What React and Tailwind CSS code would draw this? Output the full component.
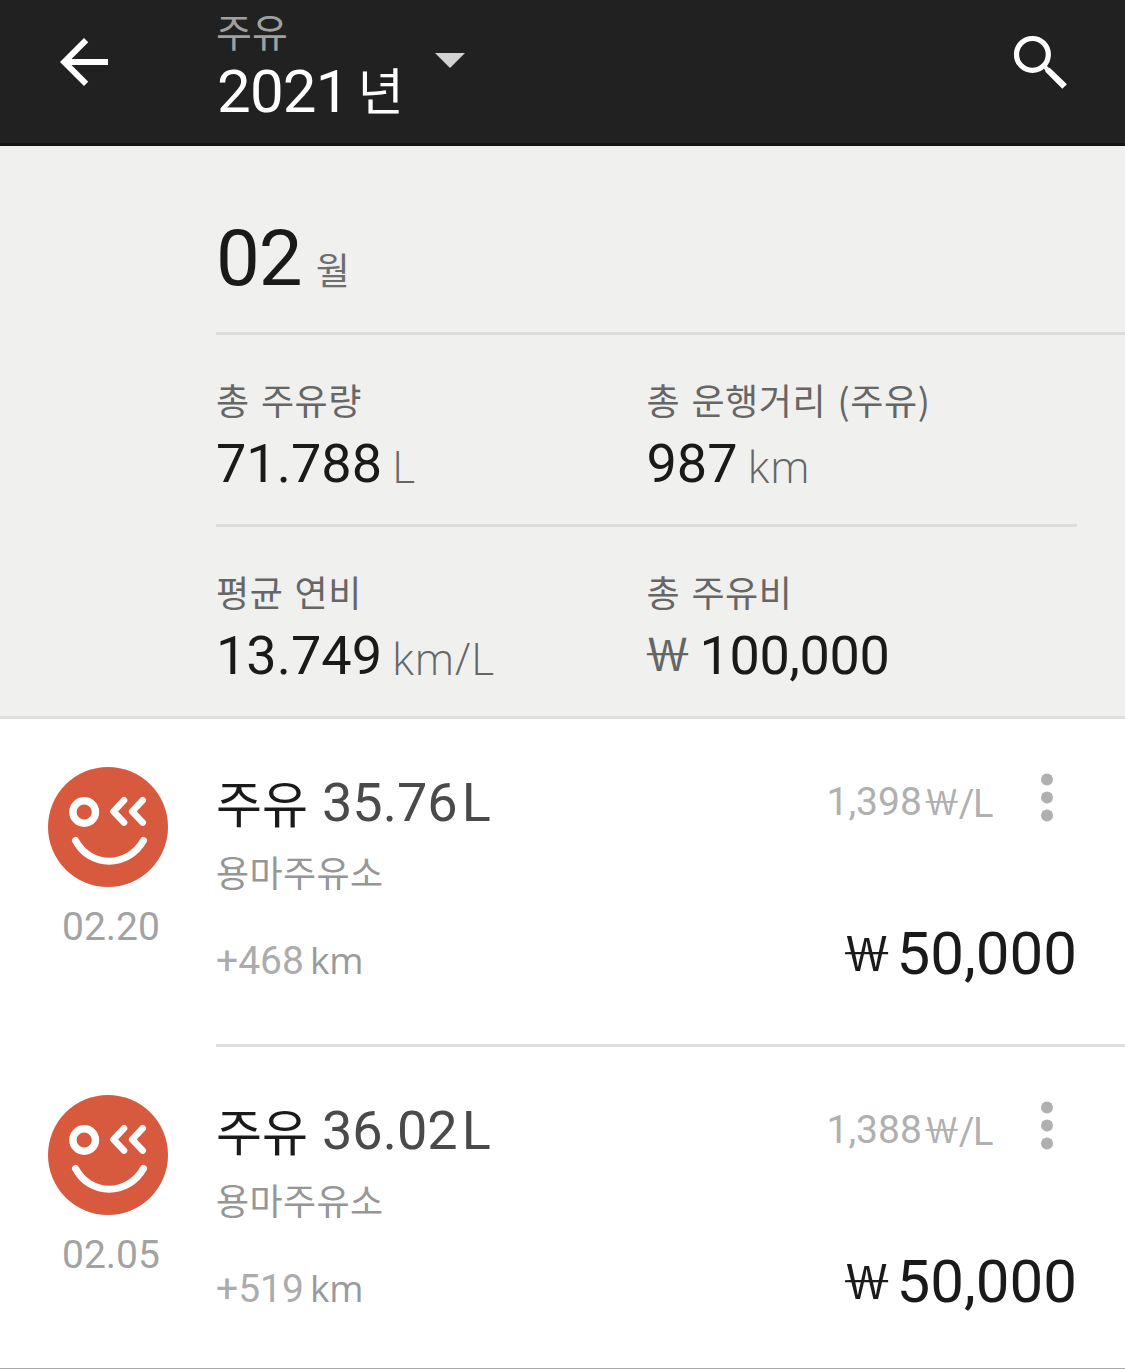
const stats = [
  { label: "총 주유량", value: "71.788", unit: "L" },
  { label: "총 운행거리 (주유)", value: "987", unit: "km" },
  { label: "평균 연비", value: "13.749", unit: "km/L" },
  { label: "총 주유비", value: "100,000", currency: "₩" },
];

const records = [
  { date: "02.20", amount: "35.76", station: "용마주유소", distance: "+468", unitPrice: "1,398", price: "50,000" },
  { date: "02.05", amount: "36.02", station: "용마주유소", distance: "+519", unitPrice: "1,388", price: "50,000" },
];

const BackIcon = () => (
  <svg width="72" height="72" viewBox="0 0 24 24" fill="#fff">
    <path d="M20 11H7.83l5.59-5.59L12 4l-8 8 8 8 1.41-1.41L7.83 13H20v-2z" />
  </svg>
);

const SearchIcon = () => (
  <svg width="56" height="56" viewBox="0 0 56 56" fill="none" stroke="#fff">
    <circle cx="20.4" cy="20.4" r="15.9" strokeWidth="5.2" />
    <path d="M32.8 33.5L33.4 37.8L50.3 54.8L54.9 50.3L38 33.9L34.5 33Z" fill="#fff" stroke="none" />
    <path d="M31 31L35 35" strokeWidth="4" />
  </svg>
);

const FaceIcon = () => (
  <svg width="120" height="120" viewBox="0 0 120 120" fill="none" stroke="#fff">
    <circle cx="60" cy="60" r="60" fill="#d7593e" stroke="none" />
    <circle cx="36.2" cy="45" r="11.3" strokeWidth="7.4" />
    <g strokeWidth="6.6" strokeLinecap="round" strokeLinejoin="round">
      <path d="M76 33.3L65.5 44.5L76 55.5" />
      <path d="M94.7 33.3L84.2 44.5L94.7 55.5" />
      <path d="M27.5 73.5C42 101 80 101 95.5 73.5" strokeWidth="7" />
    </g>
  </svg>
);

// wide, single-bar won sign
const Won = ({ className }) => (
  <span className={`flex shrink-0 justify-center font-['Noto_Sans_CJK_KR',sans-serif] leading-none ${className}`}>
    <span className="scale-x-[1.12] [font-feature-settings:'fwid']">₩</span>
  </span>
);

const Stat = ({ label, value, unit, currency }) => (
  <div className="h-[189px] pt-[46px]">
    <div className="h-[56px] font-['Noto_Sans_CJK_KR',sans-serif] text-[36px] leading-none tracking-[0.6px] text-[#666] [word-spacing:2.5px]">
      {label}
    </div>
    <div className="flex items-start leading-none whitespace-nowrap">
      {currency && <Won className="mr-[11px] w-[42px] text-[45px] text-[#666]" />}
      <span className={`text-[54px] leading-none text-[#1a1a1a] ${currency ? "tracking-[-0.4px]" : ""}`}>{value}</span>
      {unit && (
        <span className="mt-[6px] ml-[10px] font-['Open_Sans',sans-serif] text-[45px] leading-none font-light tracking-[0.7px] text-[#666]">
          {unit}
        </span>
      )}
    </div>
  </div>
);

const Record = ({ record }) => (
  <div className="flex h-[325px]">
    <div className="flex w-[216px] shrink-0 flex-col pt-[48px] pl-[48px]">
      <FaceIcon />
      <span className="mt-[21px] ml-[14px] text-[39px] leading-none text-[#a2a2a2]">{record.date}</span>
    </div>
    <div className="flex min-w-0 grow flex-col pr-[48px]">
      <div className="flex h-[134px] items-start pt-[57px] leading-none">
        <span className="font-['Noto_Sans_CJK_KR',sans-serif] text-[50px] leading-none text-[#1a1a1a]">주유</span>
        <span className="ml-[14px] text-[54px] leading-none text-[#4a4a4a]">{record.amount}</span>
        <span className="ml-[4px] text-[54px] leading-none text-[#4a4a4a]">L</span>
        <span className="mt-[7px] ml-auto text-[39px] leading-none text-[#b0b0b0]">{record.unitPrice}</span>
        <Won className="mt-[6px] ml-[2px] w-[35px] text-[35px] text-[#b0b0b0]" />
        <span className="mt-[9px] text-[38px] leading-none tracking-[-1.5px] text-[#b0b0b0]">/L</span>
        <svg className="-mt-[4px] mr-[24px] ml-[49px] shrink-0" width="12" height="52" viewBox="0 0 12 52" fill="#b0b0b0">
          <circle cx="6" cy="7.5" r="6" />
          <circle cx="6" cy="25.5" r="6" />
          <circle cx="6" cy="43.5" r="6" />
        </svg>
      </div>
      <div className="h-[70px] font-['Noto_Sans_CJK_KR',sans-serif] text-[36px] leading-none tracking-[0.4px] text-[#969696]">
        {record.station}
      </div>
      <div className="flex items-start leading-none">
        <span className="mt-[19px] text-[39px] leading-none text-[#acacac]">{record.distance}</span>
        <span className="mt-[18px] ml-[6px] font-['Open_Sans',sans-serif] text-[37px] leading-none text-[#9a9a9a]">km</span>
        <Won className="mt-[3px] ml-auto w-[44px] text-[47px] text-[#1a1a1a]" />
        <span className="mt-[1px] ml-[8px] text-[60px] leading-none text-[#1a1a1a]">{record.price}</span>
      </div>
    </div>
  </div>
);

export default function App() {
  return (
    <div className="flex h-[1369px] w-[1125px] flex-col overflow-hidden border-b border-[#aaa] bg-white font-[Roboto,sans-serif]">
      <header className="flex h-[146px] shrink-0 items-start border-b-3 border-[#161515] bg-[#212121]">
        <div className="w-[216px] pt-[26px] pl-[48px]">
          <BackIcon />
        </div>
        <div className="pt-[11px]">
          <div className="h-[51px] font-['Noto_Sans_CJK_KR',sans-serif] text-[39px] leading-none text-[#a0a0a0]">
            주유
          </div>
          <div className="flex items-start leading-none text-white">
            <span className="ml-[1px] text-[60px] leading-none tracking-[-0.8px]">2021</span>
            <span className="mt-[1px] ml-[9px] font-['Noto_Sans_CJK_KR',sans-serif] text-[50px] leading-none">년</span>
          </div>
        </div>
        <svg className="mt-[53px] ml-[31px]" width="30" height="15" viewBox="0 0 30 15" fill="#d3d3d3">
          <path d="M0 0H30L15 15Z" />
        </svg>
        <div className="mt-[34px] mr-[57px] ml-auto">
          <SearchIcon />
        </div>
      </header>

      <section className="h-[573px] shrink-0 border-b-3 border-[#dfdfdf] bg-[#f0f0ef] pl-[216px]">
        <div className="flex h-[189px] items-start border-b-3 border-[#dcdddc] pt-[74px]">
          <span className="text-[78px] leading-none tracking-[-1px] text-[#1a1a1a]">02</span>
          <span className="mt-[31px] ml-[14px] font-['Noto_Sans_CJK_KR',sans-serif] text-[37px] leading-none text-[#6e6e6e]">
            월
          </span>
        </div>
        <div className="mr-[48px] grid grid-cols-2 border-b-3 border-[#dcdddc]">
          {stats.slice(0, 2).map((stat) => (
            <Stat key={stat.label} {...stat} />
          ))}
        </div>
        <div className="mr-[48px] grid grid-cols-2">
          {stats.slice(2).map((stat) => (
            <Stat key={stat.label} {...stat} />
          ))}
        </div>
      </section>

      <main>
        {records.map((record, i) => (
          <div key={record.date}>
            {i > 0 && <div className="ml-[216px] h-[3px] bg-[#dedede]" />}
            <Record record={record} />
          </div>
        ))}
      </main>
    </div>
  );
}
